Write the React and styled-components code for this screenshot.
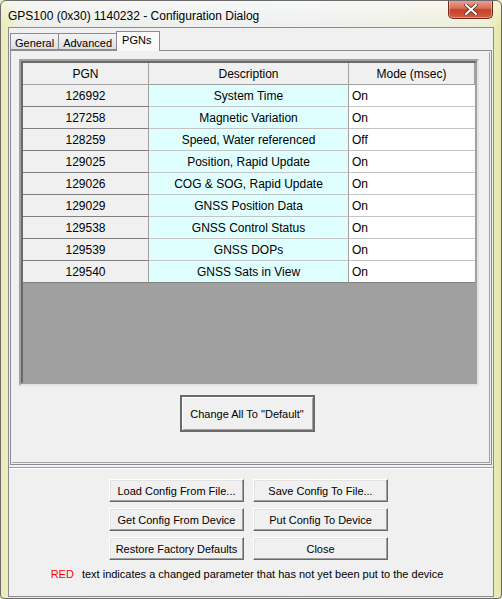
import React from 'react'
import styled, { createGlobalStyle } from 'styled-components'

const GlobalStyle = createGlobalStyle`
  html, body {
    margin: 0;
    padding: 0;
    background: #e9ecc4;
  }
  * {
    box-sizing: border-box;
  }
`

const uiFont = `"Liberation Sans", Arial, sans-serif`

const Window = styled.div`
  width: 502px;
  height: 599px;
  display: flex;
  flex-direction: column;
  border: 1px solid #6b6b6b;
  border-radius: 6px 6px 4px 4px;
  overflow: hidden;
  background:
    linear-gradient(180deg, rgba(255, 255, 255, 0.55) 0, rgba(255, 255, 255, 0) 26px),
    linear-gradient(90deg, #ecebb2 0, #eceee8 4%, #eef0f1 60%, #eeeed6 97%, #e8e6a6 100%);
  font-family: ${uiFont};
`

const TitleBar = styled.div`
  height: 26px;
  display: flex;
  align-items: flex-start;
  justify-content: space-between;
  padding-left: 7px;
  padding-right: 8px;
`

const Title = styled.div`
  font-size: 12px;
  color: #000;
  line-height: 14px;
  padding-top: 8px;
`

const CloseButton = styled.div`
  width: 45px;
  height: 19px;
  margin-top: -1px;
  display: flex;
  align-items: center;
  justify-content: center;
  border: 1px solid #6f2a20;
  border-top: none;
  border-radius: 0 0 5px 5px;
  background: linear-gradient(180deg, #eaa797 0, #d96f59 45%, #c2412a 55%, #d75b3d 100%);
  box-shadow: inset 0 0 0 1px rgba(255, 255, 255, 0.35);
`

const Client = styled.div`
  flex: 1;
  margin: 0 7px 1px 7px;
  border: 1px solid #8c8c8c;
  background: #f0f0f0;
  display: flex;
  flex-direction: column;
`

const TabStrip = styled.div`
  display: flex;
  align-items: flex-end;
  padding: 3px 0 0 1px;
  height: 22px;
  position: relative;
  z-index: 1;
`

const Tab = styled.div`
  height: ${(p) => (p.$active ? '20px' : '17px')};
  padding: ${(p) => (p.$active ? '2px 8px 0 5px' : '3px 4px 0 4px')};
  margin-left: ${(p) => (p.$first ? '0' : '-1px')};
  margin-bottom: ${(p) => (p.$active ? '-1px' : '0')};
  font-size: 11px;
  line-height: 13px;
  color: #000;
  border: 1px solid #898c95;
  border-bottom: ${(p) => (p.$active ? 'none' : '1px solid #898c95')};
  background: ${(p) =>
    p.$active ? '#f9f9f9' : 'linear-gradient(180deg, #f3f3f3 0, #ebebeb 50%, #dedede 100%)'};
`

const Panel = styled.div`
  height: 415px;
  margin: 0 1px;
  border: 1px solid #898c95;
  background: #f0f0f0;
  padding: 1px;
`

const PanelInner = styled.div`
  height: 100%;
  border-right: 1px solid #a0a0a0;
  border-bottom: 1px solid #a0a0a0;
  display: flex;
  flex-direction: column;
  align-items: center;
  padding: 7px 0 0 0;
`

const TableFrame = styled.div`
  width: 460px;
  height: 327px;
  margin-left: -3px;
  border: 2px solid #a0a0a0;
  border-right-color: #e3e3e3;
  border-bottom-color: #e3e3e3;
`

const TableInner = styled.div`
  height: 100%;
  border: 2px solid #696969;
  border-right-color: #a0a0a0;
  border-bottom-color: #a0a0a0;
  background: #a0a0a0;
`

const Grid = styled.div`
  display: grid;
  grid-template-columns: 126px 200px 126px;
  grid-auto-rows: 22px;
`

const HeadCell = styled.div`
  background: #f0f0f0;
  border-right: 1px solid #a0a0a0;
  border-bottom: 1px solid #a0a0a0;
  display: flex;
  align-items: center;
  justify-content: center;
  font-size: 12px;
  color: #000;
  &:last-child {
    border-right: none;
  }
`

const Cell = styled.div`
  background: ${(p) => p.$bg};
  border-right: ${(p) => (p.$last ? 'none' : '1px solid #a0a0a0')};
  border-bottom: 1px solid ${(p) => (p.$dark ? '#808080' : '#c4c4c4')};
  display: flex;
  align-items: center;
  justify-content: ${(p) => (p.$left ? 'flex-start' : 'center')};
  padding-left: ${(p) => (p.$left ? '3px' : '0')};
  font-size: 12px;
  color: #000;
  white-space: nowrap;
`

const Button = styled.button`
  font-family: ${uiFont};
  font-size: 11px;
  color: #000;
  background: #f0f0f0;
  border: 1px solid;
  border-color: #ffffff #696969 #696969 #ffffff;
  box-shadow: inset -1px -1px 0 #a0a0a0, inset 1px 1px 0 #e3e3e3;
  padding: 0;
  cursor: default;
`

const DefaultButton = styled(Button)`
  width: 135px;
  height: 37px;
  margin-top: 9px;
  margin-left: -7px;
  border: 2px solid #6a6a6a;
  box-shadow: inset 1px 1px 0 #ffffff, inset -1px -1px 0 #a0a0a0;
`

const Divider = styled.div`
  margin-top: 2px;
  border-top: 1px solid #a0a0a0;
  border-bottom: 1px solid #ffffff;
`

const ButtonGrid = styled.div`
  display: grid;
  grid-template-columns: 135px 135px;
  grid-auto-rows: 23px;
  column-gap: 9px;
  row-gap: 6px;
  justify-content: center;
  margin-top: 10px;
  padding-right: 5px;
`

const Note = styled.div`
  margin-top: 8px;
  font-size: 11px;
  color: #000;
  text-align: center;
  padding-right: 8px;
  white-space: nowrap;
`

const Red = styled.span`
  color: #ff0000;
  margin-right: 8px;
`

const rows = [
  ['126992', 'System Time', 'On'],
  ['127258', 'Magnetic Variation', 'On'],
  ['128259', 'Speed, Water referenced', 'Off'],
  ['129025', 'Position, Rapid Update', 'On'],
  ['129026', 'COG & SOG, Rapid Update', 'On'],
  ['129029', 'GNSS Position Data', 'On'],
  ['129538', 'GNSS Control Status', 'On'],
  ['129539', 'GNSS DOPs', 'On'],
  ['129540', 'GNSS Sats in View', 'On'],
]

const CloseIcon = () => (
  <svg width="14" height="11" viewBox="0 0 14 11">
    <path
      d="M2 1 L12 10 M12 1 L2 10"
      stroke="#5a2a22"
      strokeWidth="3.6"
      strokeLinecap="square"
    />
    <path
      d="M2 1 L12 10 M12 1 L2 10"
      stroke="#ffffff"
      strokeWidth="2"
      strokeLinecap="square"
    />
  </svg>
)

const App = () => {
  return (
    <>
      <GlobalStyle />
      <Window>
        <TitleBar>
          <Title>GPS100 (0x30) 1140232 - Configuration Dialog</Title>
          <CloseButton>
            <CloseIcon />
          </CloseButton>
        </TitleBar>

        <Client>
          <TabStrip>
            <Tab $first>General</Tab>
            <Tab>Advanced</Tab>
            <Tab $active>PGNs</Tab>
          </TabStrip>

          <Panel>
            <PanelInner>
              <TableFrame>
                <TableInner>
                  <Grid>
                    <HeadCell>PGN</HeadCell>
                    <HeadCell>Description</HeadCell>
                    <HeadCell>Mode (msec)</HeadCell>
                    {rows.map(([pgn, desc, mode], i) => {
                      const lastRow = i === rows.length - 1
                      return (
                        <React.Fragment key={pgn}>
                          <Cell $bg="#f0f0f0" $dark>
                            {pgn}
                          </Cell>
                          <Cell $bg="#dfffff" $dark={lastRow}>
                            {desc}
                          </Cell>
                          <Cell $bg="#ffffff" $left $last $dark={lastRow}>
                            {mode}
                          </Cell>
                        </React.Fragment>
                      )
                    })}
                  </Grid>
                </TableInner>
              </TableFrame>
              <DefaultButton>Change All To "Default"</DefaultButton>
            </PanelInner>
          </Panel>

          <Divider />

          <ButtonGrid>
            <Button>Load Config From File...</Button>
            <Button>Save Config To File...</Button>
            <Button>Get Config From Device</Button>
            <Button>Put Config To Device</Button>
            <Button>Restore Factory Defaults</Button>
            <Button>Close</Button>
          </ButtonGrid>

          <Note>
            <Red>RED</Red>
            text indicates a changed parameter that has not yet been put to the device
          </Note>
        </Client>
      </Window>
    </>
  )
}

export default App
